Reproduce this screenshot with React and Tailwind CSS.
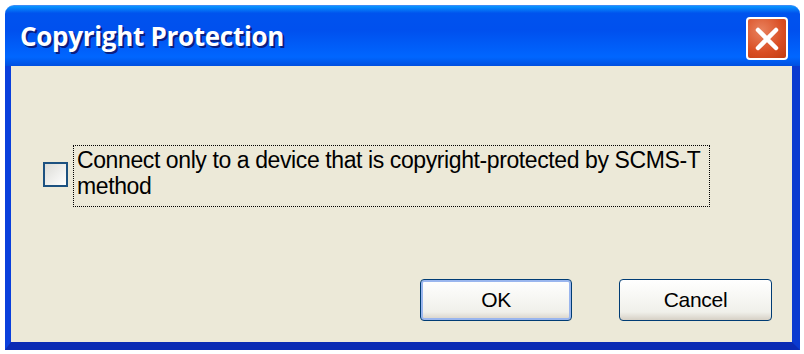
import React from 'react';

export default function App() {
  return (
    <div className="w-[804px] h-[354px] bg-white pl-[5px] pt-[5px]">
      <div className="w-[795px] h-[345px] flex flex-col">
        {/* title bar */}
        <div className="h-[61px] flex items-start rounded-t-[9px] bg-[linear-gradient(to_bottom,#0997ff_0%,#0053ee_12%,#0050ee_40%,#0066ff_85%,#0050e0_100%)] border-t border-[#3c8cf8]">
          <div
            className="pl-[15px] pt-[15px] text-white font-bold text-[26px] leading-[30px] tracking-[-0.3px] [text-shadow:2px_2px_0_#0a1e80]"
            style={{ fontFamily: '"Open Sans", "DejaVu Sans", sans-serif' }}
          >
            Copyright Protection
          </div>
          <button className="ml-auto mt-[11px] mr-[12px] w-[42px] h-[43px] rounded-[4px] border-2 border-white bg-[radial-gradient(circle_at_35%_30%,#e9835f,#d94d22_60%,#c23d12)] flex items-center justify-center">
            <svg width="26" height="26" viewBox="0 0 26 26">
              <path d="M4 4 L22 22 M22 4 L4 22" stroke="white" strokeWidth="4.5" strokeLinecap="round" />
            </svg>
          </button>
        </div>
        {/* body */}
        <div
          className="flex-1 bg-[#ece9d8] border-l-[6px] border-r-[8px] border-b-[8px] border-l-[#0a3fdc] border-r-[#0a3ad0] border-b-[#0a2bb4] flex flex-col"
          style={{ fontFamily: '"Liberation Sans", Arial, sans-serif' }}
        >
          <div className="pt-[79px] pl-[32px] flex items-start">
            <div className="mt-[17px] w-[25px] h-[25px] border-2 border-[#1c5180] bg-[linear-gradient(135deg,#dcdcd7,#ffffff)]" />
            <div className="ml-[5px] w-[637px] h-[62px] border border-dotted border-black pl-[3px] pt-[1px] text-[23px] leading-[26px] tracking-[-0.4px] text-black">
              Connect only to a device that is copyright-protected by SCMS-T method
            </div>
          </div>
          <div className="mt-auto mb-[21px] mr-[20px] flex justify-end gap-[47px] text-[21px] tracking-[-0.3px] text-black">
            <button className="w-[152px] h-[42px] rounded-[4px] border border-[#003c74] bg-[linear-gradient(to_bottom,#ffffff,#f0f0ea_80%,#d6d0c5)] shadow-[inset_0_0_0_2px_#9ab6ee]">
              OK
            </button>
            <button className="w-[153px] h-[42px] rounded-[4px] border border-[#003c74] bg-[linear-gradient(to_bottom,#ffffff,#f0f0ea_80%,#d6d0c5)]">
              Cancel
            </button>
          </div>
        </div>
      </div>
    </div>
  );
}
